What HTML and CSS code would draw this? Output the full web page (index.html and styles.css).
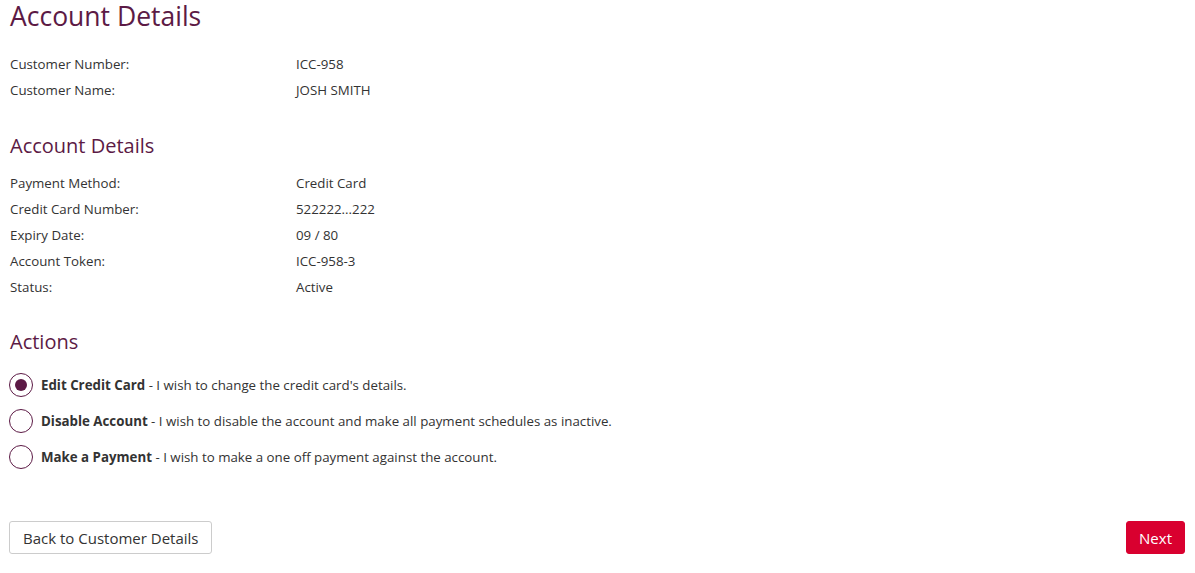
FILE: index.html
```html
<!DOCTYPE html>
<html>
	<head>
		<meta charset="UTF-8">
		<title>Account Details</title>
		<link rel="stylesheet" href="styles.css">
	</head>
	<body>
		<div class="page">
			<h1 class="title">Account Details</h1>

			<div class="details customer">
				<div class="row"><span class="label">Customer Number:</span><span class="value">ICC-958</span></div>
				<div class="row"><span class="label">Customer Name:</span><span class="value">JOSH SMITH</span></div>
			</div>

			<h2 class="subtitle">Account Details</h2>
			<div class="details account">
				<div class="row"><span class="label">Payment Method:</span><span class="value">Credit Card</span></div>
				<div class="row"><span class="label">Credit Card Number:</span><span class="value">522222...222</span></div>
				<div class="row"><span class="label">Expiry Date:</span><span class="value">09 / 80</span></div>
				<div class="row"><span class="label">Account Token:</span><span class="value">ICC-958-3</span></div>
				<div class="row"><span class="label">Status:</span><span class="value">Active</span></div>
			</div>

			<h2 class="subtitle">Actions</h2>
			<div class="actions">
				<label class="option">
					<input type="radio" name="action" checked>
					<span class="radio"></span>
					<span class="text"><b>Edit Credit Card</b> - I wish to change the credit card's details.</span>
				</label>
				<label class="option">
					<input type="radio" name="action">
					<span class="radio"></span>
					<span class="text"><b>Disable Account</b> - I wish to disable the account and make all payment schedules as inactive.</span>
				</label>
				<label class="option">
					<input type="radio" name="action">
					<span class="radio"></span>
					<span class="text"><b>Make a Payment</b> - I wish to make a one off payment against the account.</span>
				</label>
			</div>

			<div class="buttons">
				<button class="btn btn-default">Back to Customer Details</button>
				<button class="btn btn-primary">Next</button>
			</div>
		</div>
	</body>
</html>
```

FILE: styles.css
```css
body{
	margin: 0;
	padding: 0;
	font-family: "Open Sans", "Liberation Sans", sans-serif;
	font-size: 13.3px;
	color: #333;
	background: #fff;
}
.page{
	padding: 0 10px 0 10px;
}
.title{
	margin: 0;
	font-size: 26.5px;
	font-weight: normal;
	line-height: 32px;
	color: #5c1a45;
}
.subtitle{
	margin: 0;
	font-size: 20px;
	font-weight: normal;
	line-height: 26px;
	color: #5c1a45;
}
.details{
	padding: 19px 0 30px 0;
}
.details.account{
	padding: 11px 0 29px 0;
}
.row{
	display: flex;
	line-height: 26px;
}
.label{
	width: 286px;
}
.actions{
	padding-top: 12px;
}
.option{
	display: flex;
	align-items: center;
	height: 36px;
	cursor: pointer;
	margin-left: -1px;
}
.option input{
	display: none;
}
.radio{
	box-sizing: border-box;
	width: 24px;
	height: 24px;
	border: 1.5px solid #5c1a45;
	border-radius: 50%;
	margin-right: 8px;
	display: flex;
	align-items: center;
	justify-content: center;
}
.option input:checked + .radio::after{
	content: "";
	width: 12px;
	height: 12px;
	border-radius: 50%;
	background: #5c1a45;
}
.text b{
	font-weight: bold;
}
.buttons{
	display: flex;
	justify-content: space-between;
	margin-top: 46px;
	margin-left: -1px;
}
.btn{
	font-family: inherit;
	font-size: 15px;
	height: 33px;
	padding: 0 13px;
	border-radius: 3px;
	cursor: pointer;
}
.btn-default{
	background: #fff;
	border: 1px solid #ccc;
	color: #333;
}
.btn-primary{
	padding: 0 12px;
	background: #d9002f;
	border: 1px solid #d9002f;
	color: #fff;
}
```
